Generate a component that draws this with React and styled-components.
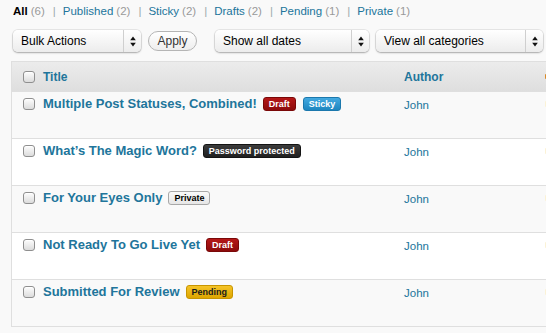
import React from 'react';
import styled, { createGlobalStyle, css } from 'styled-components';

const GlobalStyle = createGlobalStyle`
  html, body {
    margin: 0;
    padding: 0;
    background: #f9f9f9;
    font-family: "Liberation Sans", Arial, sans-serif;
    overflow: hidden;
  }
`;

const Page = styled.div`
  width: 546px;
  height: 333px;
  padding-left: 11px;
  box-sizing: border-box;
  overflow: hidden;
`;

const SubNav = styled.ul`
  list-style: none;
  margin: 0;
  padding: 4px 0 0 2px;
  display: flex;
  font-size: 11.5px;
  line-height: 14px;
  color: #bbb;
  white-space: nowrap;
`;

const SubItem = styled.li`
  & + &::before {
    content: '|';
    color: #9aa;
    margin: 0 7px 0 8px;
  }
`;

const SubLink = styled.a`
  color: ${p => (p.$current ? '#000' : '#21759b')};
  font-weight: ${p => (p.$current ? 'bold' : 'normal')};
  text-decoration: none;
`;

const Count = styled.span`
  color: #999;
  margin-left: 3px;
`;

const FilterBar = styled.div`
  display: flex;
  align-items: center;
  margin-top: 12px;
  padding-left: 2px;
  height: 22px;
`;

const Select = styled.div`
  width: ${p => p.$width}px;
  margin-right: ${p => p.$gap || 0}px;
  height: 22px;
  box-sizing: border-box;
  display: flex;
  align-items: stretch;
  border-radius: 5px;
  background: linear-gradient(#ffffff, #ececec);
  box-shadow: 0 0 0 1px rgba(0, 0, 0, 0.07), 0 1px 2px rgba(0, 0, 0, 0.28);
  font-size: 12px;
  color: #000;
`;

const SelectLabel = styled.span`
  flex: 1;
  padding-left: 8px;
  line-height: 22px;
  white-space: nowrap;
`;

const SelectArrow = styled.span`
  width: 17px;
  border-left: 1px solid #cfcfcf;
  display: flex;
  align-items: center;
  justify-content: center;
`;

const ApplyButton = styled.button`
  width: 49px;
  height: 20px;
  margin-left: 7px;
  margin-right: 18px;
  padding: 0;
  border: 1px solid #b5b5b5;
  border-radius: 11px;
  background: linear-gradient(#ffffff, #eeeeee);
  font-family: inherit;
  font-size: 12px;
  color: #333;
`;

const Table = styled.div`
  margin-top: 9px;
  border-top: 1px solid #dfdfdf;
  border-left: 1px solid #dfdfdf;
  width: 560px;
`;

const cols = css`
  display: grid;
  grid-template-columns: 31px 361px 141px 1fr;
`;

const HeadRow = styled.div`
  ${cols};
  height: 29px;
  align-items: center;
  background: linear-gradient(#ececec, #dedede);
  border-bottom: 1px solid #dfdfdf;
  font-size: 12px;
  font-weight: bold;
  color: #21759b;
`;

const Row = styled.div`
  ${cols};
  height: 46px;
  align-items: start;
  background: ${p => (p.$alt ? '#f9f9f9' : '#ffffff')};
  border-bottom: 1px solid #dfdfdf;
`;

const CheckCell = styled.div`
  display: flex;
  justify-content: center;
  padding-left: 2px;
  ${p => p.$row && css`padding-top: 6px;`}
`;

const Checkbox = styled.span`
  display: block;
  width: 12px;
  height: 12px;
  box-sizing: border-box;
  border: 1px solid #8f8f8f;
  border-radius: 3px;
  background: linear-gradient(#fdfdfd, #dcdcdc);
  box-shadow: inset 0 1px 0 #fff;
`;

const TitleCell = styled.div`
  display: flex;
  align-items: center;
  padding-top: 4px;
  height: 16px;
  white-space: nowrap;
`;

const TitleLink = styled.a`
  font-size: 13px;
  line-height: 16px;
  font-weight: bold;
  color: #21759b;
  text-decoration: none;
  margin-right: 6px;
`;

const badgeColors = {
  draft: css`
    background: linear-gradient(#b51818, #8c0b0b);
    border-color: #7a0808;
    color: #fff;
  `,
  sticky: css`
    background: linear-gradient(#43a9e0, #1e86c0);
    border-color: #1b78ad;
    color: #fff;
  `,
  password: css`
    background: linear-gradient(#3c3c3c, #202020);
    border-color: #141414;
    color: #fff;
  `,
  private: css`
    background: linear-gradient(#fafafa, #e6e6e6);
    border-color: #a8a8a8;
    color: #000;
  `,
  pending: css`
    background: linear-gradient(#f5c428, #dea600);
    border-color: #c89500;
    color: #1a1a1a;
  `,
};

const Badge = styled.span`
  display: inline-block;
  height: 12px;
  line-height: 12px;
  padding: 0 5px;
  margin-right: 7px;
  border: 1px solid;
  border-radius: 3px;
  font-size: 9px;
  font-weight: bold;
  ${p => badgeColors[p.$kind]};
`;

const AuthorCell = styled.div`
  padding-top: 5px;
  font-size: 11.5px;
  line-height: 16px;
  color: #21759b;
`;

const Bubble = styled.span`
  display: block;
  width: 6px;
  height: ${p => (p.$head ? 5 : 6)}px;
  margin-top: ${p => (p.$head ? 0 : 9)}px;
  background: ${p => (p.$head ? '#d88a2a' : '#fbf2d6')};
  border-radius: 1px;
`;

const Arrows = () => (
  <svg width="6" height="11" viewBox="0 0 6 11">
    <path d="M3 0.5 L5.8 4.2 H0.2 Z" fill="#111" />
    <path d="M3 10.5 L5.8 6.8 H0.2 Z" fill="#111" />
  </svg>
);

const filters = [
  { label: 'All', count: 6, current: true },
  { label: 'Published', count: 2 },
  { label: 'Sticky', count: 2 },
  { label: 'Drafts', count: 2 },
  { label: 'Pending', count: 1 },
  { label: 'Private', count: 1 },
];

const posts = [
  { title: 'Multiple Post Statuses, Combined!', badges: [['draft', 'Draft'], ['sticky', 'Sticky']] },
  { title: 'What\u2019s The Magic Word?', badges: [['password', 'Password protected']] },
  { title: 'For Your Eyes Only', badges: [['private', 'Private']] },
  { title: 'Not Ready To Go Live Yet', badges: [['draft', 'Draft']] },
  { title: 'Submitted For Review', badges: [['pending', 'Pending']] },
];

const App = () => {
  return (
    <Page>
      <GlobalStyle />
      <SubNav>
        {filters.map(f => (
          <SubItem key={f.label}>
            <SubLink $current={f.current}>{f.label}</SubLink>
            <Count>({f.count})</Count>
          </SubItem>
        ))}
      </SubNav>

      <FilterBar>
        <Select $width={128}>
          <SelectLabel>Bulk Actions</SelectLabel>
          <SelectArrow><Arrows /></SelectArrow>
        </Select>
        <ApplyButton>Apply</ApplyButton>
        <Select $width={154} $gap={7}>
          <SelectLabel>Show all dates</SelectLabel>
          <SelectArrow><Arrows /></SelectArrow>
        </Select>
        <Select $width={167}>
          <SelectLabel>View all categories</SelectLabel>
          <SelectArrow><Arrows /></SelectArrow>
        </Select>
      </FilterBar>

      <Table>
        <HeadRow>
          <CheckCell><Checkbox /></CheckCell>
          <div>Title</div>
          <div>Author</div>
          <div><Bubble $head /></div>
        </HeadRow>
        {posts.map((p, i) => (
          <Row key={p.title} $alt={i % 2 === 0}>
            <CheckCell $row><Checkbox /></CheckCell>
            <TitleCell>
              <TitleLink>{p.title}</TitleLink>
              {p.badges.map(([kind, text]) => (
                <Badge key={kind} $kind={kind}>{text}</Badge>
              ))}
            </TitleCell>
            <AuthorCell>John</AuthorCell>
            <div><Bubble /></div>
          </Row>
        ))}
      </Table>
    </Page>
  );
};

export default App;
